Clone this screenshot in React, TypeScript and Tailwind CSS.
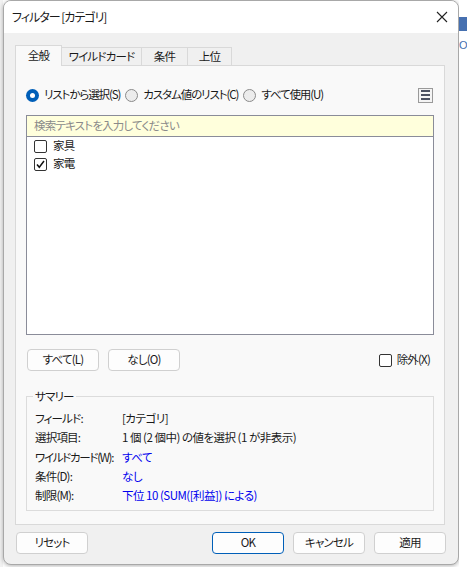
import React from "react";

const font = "font-['Noto_Sans_CJK_JP',sans-serif] [font-feature-settings:'palt']";
const t = "text-[11.5px] tracking-[-0.8px]";

function Radio({ checked }: { checked?: boolean }) {
  return checked ? (
    <span className="w-[13px] h-[13px] rounded-full bg-[#005fb8] flex items-center justify-center shrink-0">
      <span className="w-[5px] h-[5px] rounded-full bg-white" />
    </span>
  ) : (
    <span className="block w-[13px] h-[13px] rounded-full border border-[#8a8a8a] bg-[#ececec] shrink-0" />
  );
}

function Check({ checked }: { checked?: boolean }) {
  return (
    <span className="w-[13px] h-[13px] border border-[#333] rounded-[2px] bg-white flex items-center justify-center shrink-0">
      {checked && (
        <svg width="11" height="11" viewBox="0 0 11 11">
          <path d="M2 5.5 L4.3 8.3 L9 2" fill="none" stroke="#111" strokeWidth="1.5" />
        </svg>
      )}
    </span>
  );
}

function Btn({ children, primary, w = "w-[72px]" }: { children: React.ReactNode; primary?: boolean; w?: string }) {
  return (
    <div
      className={`${w} h-[22px] rounded-[4px] bg-[#fdfdfd] border ${
        primary ? "border-[#005fb8]" : "border-[#d0d0d0]"
      } flex items-center justify-center ${t} text-[#1a1a1a] shrink-0`}
    >
      {children}
    </div>
  );
}

export default function App() {
  const rows: [string, string, boolean, string][] = [
    ["フィールド:", "[カテゴリ]", false, ""],
    ["選択項目:", "1 個 (2 個中) の値を選択 (1 が非表示)", false, ""],
    ["ワイルドカード(W):", "すべて", true, "tracking-[-1.3px]"],
    ["条件(D):", "なし", true, ""],
    ["制限(M):", "下位 10 (SUM([利益]) による)", true, ""],
  ];
  return (
    <div className={`w-[467px] h-[567px] bg-white flex ${font} text-[#1a1a1a] overflow-hidden`}>
      <div className="w-[3px] h-full bg-[#f2f2f2] shrink-0" />
      <div className="w-[456px] h-[565px] shrink-0 flex flex-col bg-[#f0f0f0] border border-[#a8a8a8] rounded-[8px] overflow-hidden shadow-[0_1px_4px_rgba(0,0,0,0.3)]">
        {/* title bar */}
        <div className="h-[32px] bg-white flex items-center justify-between pl-[8px] pr-[8px] shrink-0">
          <span className="text-[12px] tracking-[-1px] text-[#1a1a1a]">フィルター [カテゴリ]</span>
          <svg width="12" height="12" viewBox="0 0 12 12" className="mr-[2px]">
            <path d="M1 1 L11 11 M11 1 L1 11" stroke="#222" strokeWidth="1.1" />
          </svg>
        </div>
        {/* body */}
        <div className="flex-1 flex flex-col pl-[11px] pr-[13px] pt-[11px]">
          {/* tabs */}
          <div className={`flex items-end h-[21px] ${t}`}>
            <div className="w-[47px] h-[21px] bg-[#f9f9f9] border border-b-0 border-[#d9d9d9] flex items-center justify-center relative top-[1px]">
              全般
            </div>
            <div className="w-[80px] h-[18px] bg-[#f0f0f0] border border-l-0 border-b-0 border-[#d9d9d9] flex items-center justify-center">
              ワイルドカード
            </div>
            <div className="w-[46px] h-[18px] bg-[#f0f0f0] border border-l-0 border-b-0 border-[#d9d9d9] flex items-center justify-center">
              条件
            </div>
            <div className="w-[44px] h-[18px] bg-[#f0f0f0] border border-l-0 border-b-0 border-[#d9d9d9] flex items-center justify-center">
              上位
            </div>
          </div>
          {/* panel */}
          <div className="w-[430px] h-[460px] bg-[#f9f9f9] border border-[#d9d9d9] flex flex-col px-[10px]">
            <div className="flex items-center h-[16px] mt-[21px] text-[11.5px] tracking-[-1.1px]">
              <Radio checked />
              <span className="ml-[5px]">リストから選択(S)</span>
              <span className="ml-[5px] flex"><Radio /></span>
              <span className="ml-[5px]">カスタム値のリスト(C)</span>
              <span className="ml-[5px] flex"><Radio /></span>
              <span className="ml-[5px]">すべて使用(U)</span>
              <span className="flex-1" />
              <span className="w-[15px] h-[15px] border border-[#9a9a9a] bg-[#f4f4f4] flex flex-col items-center justify-center gap-[2px] mr-[1px]">
                <span className="w-[9px] h-[2px] bg-[#4a5060]" />
                <span className="w-[9px] h-[2px] bg-[#4a5060]" />
                <span className="w-[9px] h-[2px] bg-[#4a5060]" />
              </span>
            </div>
            {/* list box */}
            <div className="mt-[12px] w-[408px] h-[220px] border border-[#8a8c99] bg-white flex flex-col">
              <div className={`h-[21px] bg-[#ffffdc] border-b border-[#8a8c99] flex items-center pl-[7px] ${t} text-[#8a8a8a]`}>
                検索テキストを入力してください
              </div>
              <div className={`flex items-center h-[18px] pl-[7px] ${t}`}>
                <Check />
                <span className="ml-[6px]">家具</span>
              </div>
              <div className={`flex items-center h-[18px] pl-[7px] ${t}`}>
                <Check checked />
                <span className="ml-[6px]">家電</span>
              </div>
            </div>
            {/* select buttons */}
            <div className={`flex items-center mt-[14px] pl-[1px] ${t}`}>
              <Btn>すべて(L)</Btn>
              <span className="ml-[9px]"><Btn>なし(O)</Btn></span>
              <span className="flex-1" />
              <Check />
              <span className="ml-[5px] mr-[4px]">除外(X)</span>
            </div>
            {/* summary */}
            <div className="mt-[25px] w-[408px] h-[115px] border border-[#dcdcdc] relative flex flex-col pl-[8px] pt-[12px]">
              <span className={`absolute -top-[9px] left-[6px] bg-[#f9f9f9] px-[2px] ${t} leading-[16px]`}>
                サマリー
              </span>
              {rows.map(([k, v, blue, tk]) => (
                <div key={k} className={`flex items-center h-[19.3px] ${t} whitespace-nowrap`}>
                  <span className={`w-[87px] shrink-0 ${tk}`}>{k}</span>
                  <span className={`tracking-[-0.5px] ${blue ? "text-[#0000ee]" : ""}`}>{v}</span>
                </div>
              ))}
            </div>
          </div>
          {/* bottom buttons */}
          <div className="flex items-center mt-[7px] pl-[1px]">
            <Btn>リセット</Btn>
            <span className="flex-1" />
            <Btn primary>OK</Btn>
            <span className="ml-[9px]"><Btn>キャンセル</Btn></span>
            <span className="ml-[9px] mr-[-1px]"><Btn>適用</Btn></span>
          </div>
        </div>
      </div>
      <div className="flex-1 h-full bg-white flex flex-col overflow-hidden">
        <div className="h-[17px]" />
        <div className="h-[14px] bg-[#4670b0]" />
        <div className="text-[11px] text-[#4670b0] mt-[6px] font-['Liberation_Sans',sans-serif] whitespace-nowrap">Oc</div>
      </div>
    </div>
  );
}
